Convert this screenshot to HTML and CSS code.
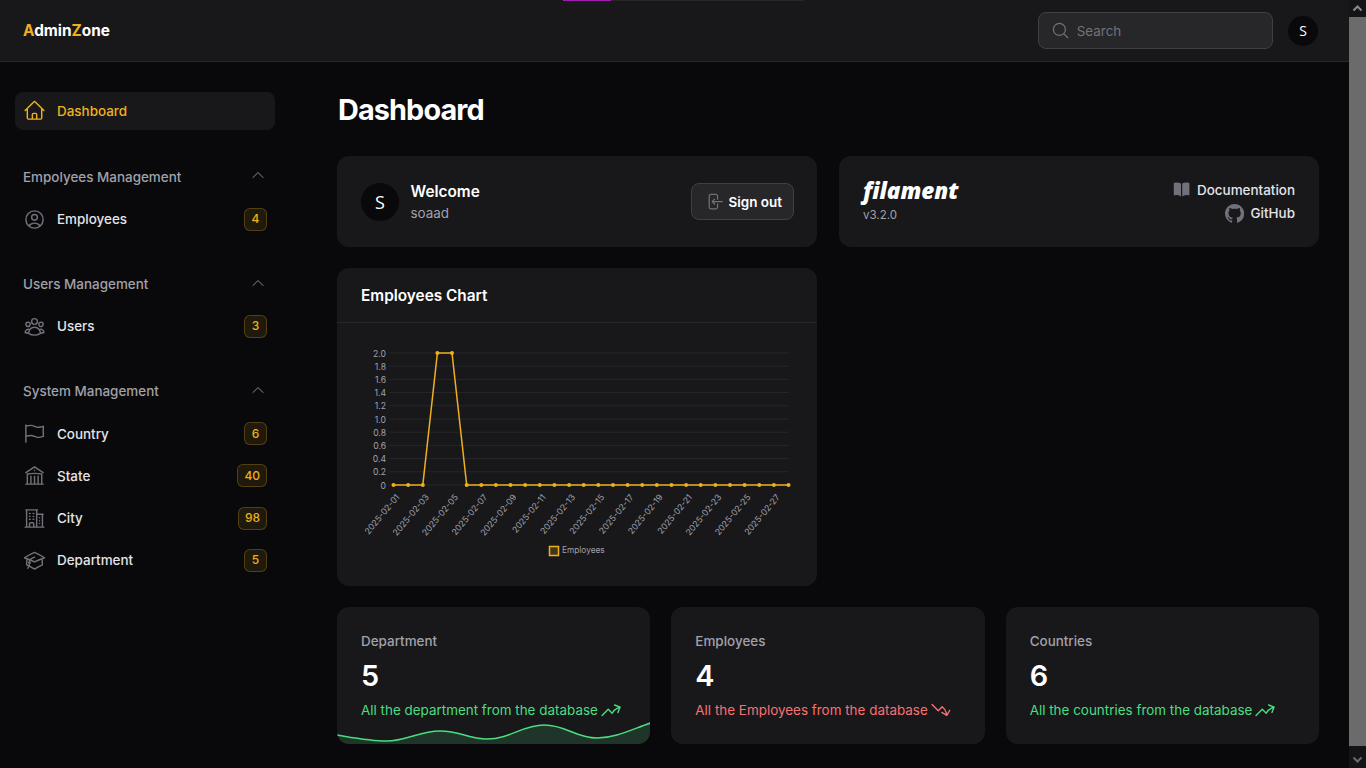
FILE: index.html
```html
<!DOCTYPE html>
<html lang="en">
<head>
<meta charset="utf-8">
<title>Dashboard - AdminZone</title>
<link rel="stylesheet" href="styles.css">
</head>
<body>
<div class="window">
  <div class="page">
    <div class="progress"><span class="progress-fill"></span></div>
    <header class="topbar">
      <div class="brand"><span class="gold">A</span>dmin<span class="gold">Z</span>one</div>
      <div class="top-actions">
        <label class="search">
          <svg class="icon-20" viewBox="0 0 24 24" fill="none" stroke="currentColor" stroke-width="1.5" stroke-linecap="round" stroke-linejoin="round"><path d="M21 21l-5.197-5.197m0 0A7.5 7.5 0 105.196 5.196a7.5 7.5 0 0010.607 10.607z"/></svg>
          <span>Search</span>
        </label>
        <div class="avatar avatar-sm">S</div>
      </div>
    </header>
    <div class="layout">
      <nav class="sidebar">
        <a class="nav-item active">
          <svg class="nav-icon" viewBox="0 0 24 24" fill="none" stroke="currentColor" stroke-width="1.5" stroke-linecap="round" stroke-linejoin="round"><path d="M2.25 12l8.954-8.955c.44-.439 1.152-.439 1.591 0L21.75 12M4.5 9.75v10.125c0 .621.504 1.125 1.125 1.125H9.75v-4.875c0-.621.504-1.125 1.125-1.125h2.25c.621 0 1.125.504 1.125 1.125V21h4.125c.621 0 1.125-.504 1.125-1.125V9.75M8.25 21h8.25"/></svg>
          <span class="nav-text">Dashboard</span>
        </a>

        <section class="nav-group">
          <div class="group-label"><span>Empolyees Management</span>
            <svg class="chev" viewBox="0 0 24 24" fill="none" stroke="currentColor" stroke-width="1.5" stroke-linecap="round" stroke-linejoin="round"><path d="M4.5 15.75l7.5-7.5 7.5 7.5"/></svg></div>
          <a class="nav-item">
            <svg class="nav-icon" viewBox="0 0 24 24" fill="none" stroke="currentColor" stroke-width="1.5" stroke-linecap="round" stroke-linejoin="round"><path d="M17.982 18.725A7.488 7.488 0 0012 15.75a7.488 7.488 0 00-5.982 2.975m11.963 0a9 9 0 10-11.963 0m11.963 0A8.966 8.966 0 0112 21a8.966 8.966 0 01-5.982-2.275M15 9.75a3 3 0 11-6 0 3 3 0 016 0z"/></svg>
            <span class="nav-text">Employees</span><span class="badge">4</span>
          </a>
        </section>

        <section class="nav-group">
          <div class="group-label"><span>Users Management</span>
            <svg class="chev" viewBox="0 0 24 24" fill="none" stroke="currentColor" stroke-width="1.5" stroke-linecap="round" stroke-linejoin="round"><path d="M4.5 15.75l7.5-7.5 7.5 7.5"/></svg></div>
          <a class="nav-item">
            <svg class="nav-icon" viewBox="0 0 24 24" fill="none" stroke="currentColor" stroke-width="1.5" stroke-linecap="round" stroke-linejoin="round"><path d="M18 18.72a9.094 9.094 0 003.741-.479 3 3 0 00-4.682-2.72m.94 3.198l.001.031c0 .225-.012.447-.037.666A11.944 11.944 0 0112 21c-2.17 0-4.207-.576-5.963-1.584A6.062 6.062 0 016 18.719m12 0a5.971 5.971 0 00-.941-3.197m0 0A5.995 5.995 0 0012 12.75a5.995 5.995 0 00-5.058 2.772m0 0a3 3 0 00-4.681 2.72 8.986 8.986 0 003.74.477m.94-3.197a5.971 5.971 0 00-.94 3.197M15 6.75a3 3 0 11-6 0 3 3 0 016 0zm6 3a2.25 2.25 0 11-4.5 0 2.25 2.25 0 014.5 0zm-13.5 0a2.25 2.25 0 11-4.5 0 2.25 2.25 0 014.5 0z"/></svg>
            <span class="nav-text">Users</span><span class="badge">3</span>
          </a>
        </section>

        <section class="nav-group">
          <div class="group-label"><span>System Management</span>
            <svg class="chev" viewBox="0 0 24 24" fill="none" stroke="currentColor" stroke-width="1.5" stroke-linecap="round" stroke-linejoin="round"><path d="M4.5 15.75l7.5-7.5 7.5 7.5"/></svg></div>
          <a class="nav-item">
            <svg class="nav-icon" viewBox="0 0 24 24" fill="none" stroke="currentColor" stroke-width="1.5" stroke-linecap="round" stroke-linejoin="round"><path d="M3 3v1.5M3 21v-6m0 0l2.77-.693a9 9 0 016.208.682l.108.054a9 9 0 006.086.71l3.114-.732a48.524 48.524 0 01-.005-10.499l-3.11.732a9 9 0 01-6.085-.711l-.108-.054a9 9 0 00-6.208-.682L3 4.5M3 15V4.5"/></svg>
            <span class="nav-text">Country</span><span class="badge">6</span>
          </a>
          <a class="nav-item">
            <svg class="nav-icon" viewBox="0 0 24 24" fill="none" stroke="currentColor" stroke-width="1.5" stroke-linecap="round" stroke-linejoin="round"><path d="M12 21v-8.25M15.75 21v-8.25M8.25 21v-8.25M3 9l9-6 9 6m-1.5 12V10.332A48.36 48.36 0 0012 9.75c-2.551 0-5.056.2-7.5.582V21M3 21h18M12 6.75h.008v.008H12V6.75z"/></svg>
            <span class="nav-text">State</span><span class="badge">40</span>
          </a>
          <a class="nav-item">
            <svg class="nav-icon" viewBox="0 0 24 24" fill="none" stroke="currentColor" stroke-width="1.5" stroke-linecap="round" stroke-linejoin="round"><path d="M2.25 21h19.5m-18-18v18m10.5-18v18m6-13.5V21M6.75 6.75h.75m-.75 3h.75m-.75 3h.75m3-6h.75m-.75 3h.75m-.75 3h.75M6.75 21v-3.375c0-.621.504-1.125 1.125-1.125h2.25c.621 0 1.125.504 1.125 1.125V21M3 3h12m-.75 4.5H21m-3.75 3.75h.008v.008h-.008v-.008zm0 3h.008v.008h-.008v-.008zm0 3h.008v.008h-.008v-.008z"/></svg>
            <span class="nav-text">City</span><span class="badge">98</span>
          </a>
          <a class="nav-item">
            <svg class="nav-icon" viewBox="0 0 24 24" fill="none" stroke="currentColor" stroke-width="1.5" stroke-linecap="round" stroke-linejoin="round"><path d="M4.26 10.147a60.436 60.436 0 00-.491 6.347A48.627 48.627 0 0112 20.904a48.627 48.627 0 018.232-4.41 60.46 60.46 0 00-.491-6.347m-15.482 0a50.57 50.57 0 00-2.658-.813A59.905 59.905 0 0112 3.493a59.902 59.902 0 0110.399 5.84c-.896.248-1.783.52-2.658.814m-15.482 0A50.697 50.697 0 0112 13.489a50.702 50.702 0 017.74-3.342M6.75 15a.75.75 0 100-1.5.75.75 0 000 1.5zm0 0v-3.675A55.378 55.378 0 0112 8.443m-7.007 11.55A5.981 5.981 0 006.75 15.75v-1.5"/></svg>
            <span class="nav-text">Department</span><span class="badge">5</span>
          </a>
        </section>
      </nav>

      <main class="main">
        <h1 class="title">Dashboard</h1>
        <div class="grid">
          <section class="card info-card user-card">
            <div class="avatar avatar-lg">S</div>
            <div class="welcome">
              <div class="welcome-title">Welcome</div>
              <div class="welcome-name">soaad</div>
            </div>
            <button class="signout">
              <svg class="icon-20" viewBox="0 0 24 24" fill="none" stroke="currentColor" stroke-width="1.5" stroke-linecap="round" stroke-linejoin="round"><path d="M15.75 9V5.25A2.25 2.25 0 0013.5 3h-6a2.25 2.25 0 00-2.25 2.25v13.5A2.25 2.25 0 007.5 21h6a2.25 2.25 0 002.25-2.25V15M12 9l-3 3m0 0l3 3m-3-3h12.75"/></svg>
              <span>Sign out</span>
            </button>
          </section>

          <section class="card info-card">
            <div class="filament">
              <div class="filament-logo">filament</div>
              <div class="filament-version">v3.2.0</div>
            </div>
            <div class="links">
              <a class="link">
                <svg class="icon-20 link-icon" viewBox="0 0 24 24" fill="currentColor"><path d="M11.25 4.533A9.707 9.707 0 006 3a9.735 9.735 0 00-3.25.555.75.75 0 00-.5.707v14.25a.75.75 0 001 .707A8.237 8.237 0 016 18.75c1.995 0 3.823.707 5.25 1.886V4.533zM12.75 20.636A8.214 8.214 0 0118 18.75c.966 0 1.89.166 2.75.47a.75.75 0 001-.708V4.262a.75.75 0 00-.5-.707A9.735 9.735 0 0018 3a9.707 9.707 0 00-5.25 1.533v16.103z"/></svg>
                <span>Documentation</span>
              </a>
              <a class="link">
                <svg class="icon-20 link-icon" viewBox="0 0 16 16" fill="currentColor"><path d="M8 0C3.58 0 0 3.58 0 8c0 3.54 2.29 6.53 5.47 7.59.4.07.55-.17.55-.38 0-.19-.01-.82-.01-1.49-2.01.37-2.53-.49-2.69-.94-.09-.23-.48-.94-.82-1.13-.28-.15-.68-.52-.01-.53.63-.01 1.08.58 1.23.82.72 1.21 1.87.87 2.33.66.07-.52.28-.87.51-1.07-1.78-.2-3.64-.89-3.64-3.95 0-.87.31-1.59.82-2.15-.08-.2-.36-1.02.08-2.12 0 0 .67-.21 2.2.82.64-.18 1.32-.27 2-.27.68 0 1.36.09 2 .27 1.53-1.04 2.2-.82 2.2-.82.44 1.1.16 1.92.08 2.12.51.56.82 1.27.82 2.15 0 3.07-1.87 3.75-3.65 3.95.29.25.54.73.54 1.48 0 1.07-.01 1.93-.01 2.2 0 .21.15.46.55.38A8.013 8.013 0 0016 8c0-4.42-3.58-8-8-8z"/></svg>
                <span>GitHub</span>
              </a>
            </div>
          </section>

          <section class="card chart-card">
            <h2 class="chart-title">Employees Chart</h2>
            <svg class="chart" viewBox="337 323 480 263" width="480" height="263">
              <g class="grid-lines">
                <path d="M389 353H789M389 366.2H789M389 379.4H789M389 392.6H789M389 405.8H789M389 419H789M389 432.2H789M389 445.4H789M389 458.6H789M389 471.8H789M389 485H789"/>
              </g>
              <g class="ticks">
                <text x="386" y="356.5">2.0</text><text x="386" y="369.7">1.8</text><text x="386" y="382.9">1.6</text><text x="386" y="396.1">1.4</text><text x="386" y="409.3">1.2</text><text x="386" y="422.5">1.0</text><text x="386" y="435.7">0.8</text><text x="386" y="448.9">0.6</text><text x="386" y="462.1">0.4</text><text x="386" y="475.3">0.2</text><text x="386" y="488.5">0</text>
              </g>
              <g class="dates">
                <text transform="translate(400 497.5) rotate(-50)">2025-02-01</text>
                <text transform="translate(429.3 497.5) rotate(-50)">2025-02-03</text>
                <text transform="translate(458.5 497.5) rotate(-50)">2025-02-05</text>
                <text transform="translate(487.8 497.5) rotate(-50)">2025-02-07</text>
                <text transform="translate(517 497.5) rotate(-50)">2025-02-09</text>
                <text transform="translate(546.3 497.5) rotate(-50)">2025-02-11</text>
                <text transform="translate(575.6 497.5) rotate(-50)">2025-02-13</text>
                <text transform="translate(604.8 497.5) rotate(-50)">2025-02-15</text>
                <text transform="translate(634.1 497.5) rotate(-50)">2025-02-17</text>
                <text transform="translate(663.3 497.5) rotate(-50)">2025-02-19</text>
                <text transform="translate(692.6 497.5) rotate(-50)">2025-02-21</text>
                <text transform="translate(721.9 497.5) rotate(-50)">2025-02-23</text>
                <text transform="translate(751.1 497.5) rotate(-50)">2025-02-25</text>
                <text transform="translate(780.4 497.5) rotate(-50)">2025-02-27</text>
              </g>
              <polyline class="series" points="393.5,485 422.8,485 437.4,353 452,353 466.7,485 788.5,485"/>
              <g class="dots">
                <circle cx="393.5" cy="485" r="2"/><circle cx="408.1" cy="485" r="2"/><circle cx="422.8" cy="485" r="2"/><circle cx="437.4" cy="353" r="2"/><circle cx="452" cy="353" r="2"/><circle cx="466.7" cy="485" r="2"/><circle cx="481.3" cy="485" r="2"/><circle cx="495.9" cy="485" r="2"/><circle cx="510.5" cy="485" r="2"/><circle cx="525.2" cy="485" r="2"/><circle cx="539.8" cy="485" r="2"/><circle cx="554.4" cy="485" r="2"/><circle cx="569.1" cy="485" r="2"/><circle cx="583.7" cy="485" r="2"/><circle cx="598.3" cy="485" r="2"/><circle cx="613" cy="485" r="2"/><circle cx="627.6" cy="485" r="2"/><circle cx="642.2" cy="485" r="2"/><circle cx="656.8" cy="485" r="2"/><circle cx="671.5" cy="485" r="2"/><circle cx="686.1" cy="485" r="2"/><circle cx="700.7" cy="485" r="2"/><circle cx="715.4" cy="485" r="2"/><circle cx="730" cy="485" r="2"/><circle cx="744.6" cy="485" r="2"/><circle cx="759.3" cy="485" r="2"/><circle cx="773.9" cy="485" r="2"/><circle cx="788.5" cy="485" r="2"/>
              </g>
              <rect class="legend-box" x="549.5" y="546.5" width="9" height="9"/>
              <text class="legend-text" x="562" y="553">Employees</text>
            </svg>
          </section>

          <div class="stats">
            <section class="card stat">
              <div class="stat-label">Department</div>
              <div class="stat-value">5</div>
              <div class="stat-desc up"><span>All the department from the database</span>
                <svg class="trend" viewBox="0 0 24 24" fill="none" stroke="currentColor" stroke-width="1.5" stroke-linecap="round" stroke-linejoin="round"><path d="M2.25 18L9 11.25l4.306 4.307a11.95 11.95 0 015.814-5.519l2.74-1.22m0 0l-5.94-2.28m5.94 2.28l-2.28 5.941"/></svg></div>
              <svg class="spark" viewBox="337 720 313 24" width="313" height="24" preserveAspectRatio="none">
                <path class="spark-fill" d="M337 735C355 738 370 741 387 741C405 741 420 731 440 731C460 731 468 739 487 739C510 739 522 725 544 725C566 725 575 738 597 738C615 738 630 730 650 723V744H337Z"/>
                <path class="spark-line" d="M337 735C355 738 370 741 387 741C405 741 420 731 440 731C460 731 468 739 487 739C510 739 522 725 544 725C566 725 575 738 597 738C615 738 630 730 650 723"/>
              </svg>
            </section>
            <section class="card stat">
              <div class="stat-label">Employees</div>
              <div class="stat-value">4</div>
              <div class="stat-desc down"><span>All the Employees from the database</span>
                <svg class="trend" viewBox="0 0 24 24" fill="none" stroke="currentColor" stroke-width="1.5" stroke-linecap="round" stroke-linejoin="round"><path d="M2.25 6L9 12.75l4.286-4.286a11.948 11.948 0 014.306 6.43l.776 2.898m0 0l3.182-5.511m-3.182 5.51l-5.511-3.181"/></svg></div>
            </section>
            <section class="card stat">
              <div class="stat-label">Countries</div>
              <div class="stat-value">6</div>
              <div class="stat-desc up"><span>All the countries from the database</span>
                <svg class="trend" viewBox="0 0 24 24" fill="none" stroke="currentColor" stroke-width="1.5" stroke-linecap="round" stroke-linejoin="round"><path d="M2.25 18L9 11.25l4.306 4.307a11.95 11.95 0 015.814-5.519l2.74-1.22m0 0l-5.94-2.28m5.94 2.28l-2.28 5.941"/></svg></div>
            </section>
          </div>
        </div>
      </main>
    </div>
  </div>
  <div class="scrollbar" aria-hidden="true">
    <svg class="scroll-arrow" viewBox="0 0 17 17" fill="none" stroke="currentColor" stroke-width="2"><path d="M4.5 10.5l4-4 4 4"/></svg>
    <div class="scroll-thumb"></div>
    <svg class="scroll-arrow scroll-arrow-down" viewBox="0 0 17 17" fill="none" stroke="currentColor" stroke-width="2"><path d="M4.5 6.5l4 4 4-4"/></svg>
  </div>
</div>
</body>
</html>
```
FILE: styles.css
```css
* { box-sizing: border-box; }
html, body { margin: 0; height: 100%; overflow: hidden; }
body { background: #09090b; color: #fff; font-family: Inter, "Liberation Sans", sans-serif; font-size: 13.44px; line-height: 20px; }
h1, h2 { margin: 0; }

.window { display: flex; width: 1366px; height: 768px; }
.page { position: relative; flex: 1; min-width: 0; overflow: hidden; }

.progress { position: absolute; top: 0; left: 563px; width: 241px; height: 1px; background: #27272a; }
.progress-fill { display: block; width: 48px; height: 1px; background: #a21caf; }

.topbar { display: flex; align-items: center; justify-content: space-between; height: 62px; padding: 0 31px 0 23px; background: #18181b; border-bottom: 1px solid #27272a; }
.brand { font-size: 15.36px; font-weight: 700; }
.gold { color: #eeb11c; }
.top-actions { display: flex; align-items: center; gap: 15px; }
.search { display: flex; align-items: center; gap: 7px; width: 235px; height: 37px; padding: 0 11.5px; background: #27272a; border: 1px solid #3f3f46; border-radius: 8px; color: #71717a; }
.icon-20 { width: 19.2px; height: 19.2px; flex: none; }
.trend { width: 22px; height: 22px; flex: none; }

.avatar { display: flex; align-items: center; justify-content: center; flex: none; border-radius: 50%; background: #09090b; color: #fff; font-family: "Open Sans", sans-serif; }
.avatar-sm { width: 30px; height: 30px; font-size: 14px; }
.avatar-lg { width: 38px; height: 38px; font-size: 18px; }

.layout { display: flex; }
.sidebar { display: flex; flex-direction: column; flex: none; width: 290px; padding: 30px 15px 0; }
.nav-group { display: flex; flex-direction: column; gap: 3.84px; margin-top: 26.6px; }
.nav-item { display: flex; align-items: center; gap: 10.96px; height: 38.4px; padding: 0 8px; border-radius: 8px; color: #e4e4e7; font-weight: 500; flex: none; }
.nav-item.active { height: 38px; margin-bottom: 1.2px; background: #18181b; color: #eeb11c; }
.nav-icon { width: 23.04px; height: 23.04px; flex: none; color: #71717a; }
.active .nav-icon { color: #eeb11c; }
.nav-text { flex: 1; }
.group-label { display: flex; align-items: center; justify-content: space-between; height: 38.4px; padding: 0 9.5px 0 8px; color: #a1a1aa; font-weight: 500; }
.chev { width: 16px; height: 16px; color: #8a8a92; margin-top: -3px; }
.badge { min-width: 23px; height: 23px; padding: 0 6px; display: flex; align-items: center; justify-content: center; border: 1px solid rgba(238,177,28,.25); border-radius: 6px; background: rgba(238,177,28,.1); color: #eeb11c; font-size: 12px; font-weight: 500; line-height: 1; }

.main { flex: none; width: 982px; margin-left: 47px; padding-top: 30px; }
.title { height: 36px; margin-bottom: 28px; padding-left: 1px; font-size: 28.8px; line-height: 36px; font-weight: 700; letter-spacing: -0.03em; }
.grid { display: grid; grid-template-columns: 480px 480px; column-gap: 22px; row-gap: 21px; }
.card { background: #18181b; border-radius: 12px; }

.info-card { display: flex; align-items: center; height: 91px; padding: 0 24px; }
.user-card { padding-right: 23px; }
.welcome { flex: 1; margin-left: 11.5px; }
.welcome-title { font-size: 15.36px; line-height: 22px; font-weight: 600; }
.welcome-name { color: #a1a1aa; line-height: 20px; }
.signout { display: flex; align-items: center; gap: 4.8px; height: 37px; padding: 0 11px 0 12.5px; background: #27272a; border: 1px solid #3f3f46; border-radius: 8px; color: #fff; font: 600 13.44px/20px Inter, sans-serif; }
.signout .icon-20 { color: #71717a; }

.filament { flex: 1; padding-bottom: 3px; }
.filament-logo { font-family: "Open Sans", sans-serif; font-style: italic; font-weight: 800; font-size: 22.5px; line-height: 26px; }
.filament-version { color: #a1a1aa; font-size: 11.52px; line-height: 16px; margin-top: 3px; }
.links { display: flex; flex-direction: column; align-items: flex-end; gap: 3.5px; }
.link { display: flex; align-items: center; gap: 6.3px; color: #e4e4e7; font-weight: 500; }
.link-icon { color: #71717a; }

.chart-card { height: 318px; }
.chart-title { height: 55px; padding: 0 24px; border-bottom: 1px solid #27272a; font-size: 15.36px; line-height: 56px; font-weight: 600; }
.chart { display: block; }
.chart text { font-family: Inter, sans-serif; font-size: 8.64px; fill: #a1a1aa; }
.chart .legend-text { font-size: 8.3px; }
.grid-lines path { fill: none; stroke: #27272a; stroke-width: 1; }
.ticks text { text-anchor: end; }
.dates text { text-anchor: end; }
.series { fill: none; stroke: #eeb11c; stroke-width: 1.5; }
.dots circle { fill: #eeb11c; }
.legend-box { fill: rgba(238,177,28,.2); stroke: #eeb11c; stroke-width: 1.5; }

.stats { grid-column: 1 / -1; display: grid; grid-template-columns: repeat(3, 1fr); gap: 21px; }
.stat { position: relative; height: 137px; padding: 24px; overflow: hidden; }
.stat-label { color: #a1a1aa; font-weight: 500; }
.stat-value { margin-top: 7px; font-size: 28.8px; line-height: 36px; font-weight: 600; }
.stat-desc { display: flex; align-items: center; gap: 2px; height: 20px; margin-top: 6px; white-space: nowrap; }
.up { color: #4ade80; }
.down { color: #f87171; }
.spark { position: absolute; left: 0; bottom: 0; width: 100%; height: 24px; display: block; }
.spark-fill { fill: rgba(74,222,128,.15); }
.spark-line { fill: none; stroke: #4ade80; stroke-width: 1.5; }

.scrollbar { display: flex; flex-direction: column; flex: none; width: 17px; height: 768px; background: #141416; }
.scroll-arrow { width: 17px; height: 17px; flex: none; color: #8a8a8a; display: block; }
.scroll-thumb { flex: 1; background: #6b6b6b; }
.scroll-arrow-down { margin-top: 5px; color: #6b6b6b; }
```
